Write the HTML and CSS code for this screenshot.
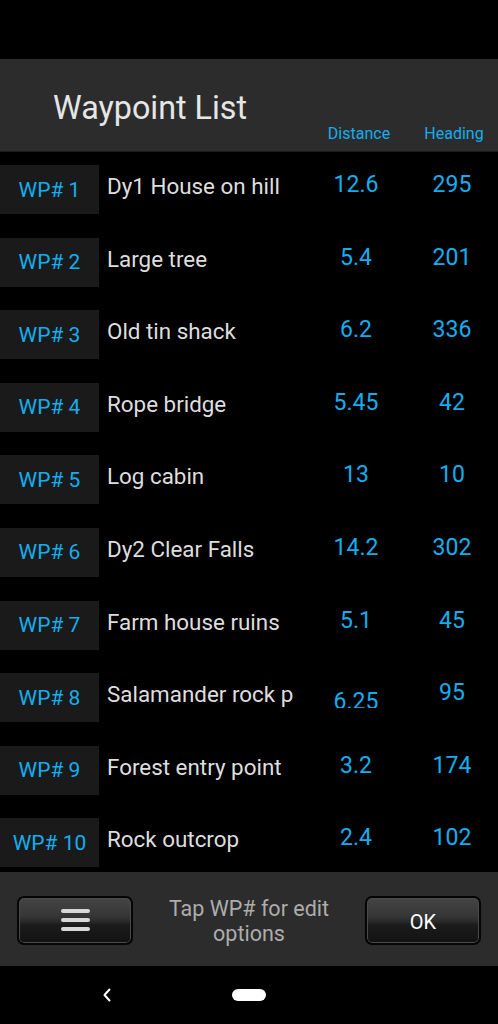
FILE: index.html
```html
<!DOCTYPE html>
<html lang="en">
<head>
  <meta charset="UTF-8">
  <title>Waypoint List</title>
  <link rel="stylesheet" href="styles.css">
</head>

<body>

<div class="screen">
  <div class="statusbar"></div>

  <div class="header">
    <h1 class="title">Waypoint List</h1>
    <div class="colhead dist">Distance</div>
    <div class="colhead head">Heading</div>
  </div>

  <!-- Waypoint rows -->
  <div class="list">
    <div class="row">
      <div class="wp">WP# 1</div>
      <div class="name">Dy1 House on hill</div>
      <div class="num dist">12.6</div>
      <div class="num head">295</div>
    </div>
    <div class="row">
      <div class="wp">WP# 2</div>
      <div class="name">Large tree</div>
      <div class="num dist">5.4</div>
      <div class="num head">201</div>
    </div>
    <div class="row">
      <div class="wp">WP# 3</div>
      <div class="name">Old tin shack</div>
      <div class="num dist">6.2</div>
      <div class="num head">336</div>
    </div>
    <div class="row">
      <div class="wp">WP# 4</div>
      <div class="name">Rope bridge</div>
      <div class="num dist">5.45</div>
      <div class="num head">42</div>
    </div>
    <div class="row">
      <div class="wp">WP# 5</div>
      <div class="name">Log cabin</div>
      <div class="num dist">13</div>
      <div class="num head">10</div>
    </div>
    <div class="row">
      <div class="wp">WP# 6</div>
      <div class="name">Dy2 Clear Falls</div>
      <div class="num dist">14.2</div>
      <div class="num head">302</div>
    </div>
    <div class="row">
      <div class="wp">WP# 7</div>
      <div class="name">Farm house ruins</div>
      <div class="num dist">5.1</div>
      <div class="num head">45</div>
    </div>
    <div class="row">
      <div class="wp">WP# 8</div>
      <div class="name">Salamander rock p</div>
      <div class="num dist low">6.25</div>
      <div class="num head">95</div>
    </div>
    <div class="row">
      <div class="wp">WP# 9</div>
      <div class="name">Forest entry point</div>
      <div class="num dist">3.2</div>
      <div class="num head">174</div>
    </div>
    <div class="row">
      <div class="wp">WP# 10</div>
      <div class="name">Rock outcrop</div>
      <div class="num dist">2.4</div>
      <div class="num head">102</div>
    </div>
  </div>

  <div class="footer">
    <button class="btn menubtn">
      <span class="bar"></span>
      <span class="bar"></span>
      <span class="bar"></span>
    </button>
    <p class="hint">Tap WP# for edit<br>options</p>
    <button class="btn okbtn">OK</button>
  </div>

  <div class="navbar">
    <svg class="back" width="10" height="14" viewBox="0 0 10 14">
      <polyline points="7.5,1.5 2.5,7 7.5,12.5" fill="none" stroke="#fff" stroke-width="2" stroke-linecap="round" stroke-linejoin="round"/>
    </svg>
    <div class="home"></div>
  </div>
</div>

</body>
</html>
```

FILE: styles.css
```css
body {
  margin: 0;
  padding: 0;
  background-color: #000;
  font-family: Roboto, 'Noto Sans', sans-serif;
}

.screen {
  width: 498px;
  height: 1024px;
  overflow: hidden;
}

.statusbar {
  height: 59px;
  background-color: #000;
}

/* Header */
.header {
  height: 93px;
  background-color: #2c2c2c;
  display: flex;
  box-sizing: border-box;
  border-bottom: 1px solid #1c1c1c;
}

.title {
  flex: 1;
  margin: 0;
  padding: 30px 0 0 53px;
  font-size: 32.3px;
  font-weight: normal;
  line-height: 38px;
  color: #e6e6e6;
}

.colhead {
  align-self: flex-end;
  padding-bottom: 8px;
  font-size: 16px;
  line-height: 19px;
  color: #14aeef;
  text-align: center;
}

.colhead.dist {
  width: 100px;
  padding-left: 6px;
  box-sizing: border-box;
}

.colhead.head {
  width: 92px;
  padding-left: 4px;
  box-sizing: border-box;
}

/* List */
.list {
  height: 720px;
  overflow: hidden;
}

.row {
  display: flex;
  height: 72.6px;
}

.wp {
  width: 99px;
  height: 49px;
  margin-top: 13px;
  background-color: #1a1a1a;
  display: flex;
  align-items: center;
  justify-content: center;
  font-size: 21px;
  color: #14aeef;
  flex-shrink: 0;
}

.name {
  width: 191px;
  margin-left: 8px;
  margin-right: 8px;
  padding-top: 22px;
  font-size: 22.4px;
  line-height: 24px;
  color: #dedede;
  white-space: nowrap;
  overflow: hidden;
  flex-shrink: 0;
}

.num {
  height: 48px;
  box-sizing: border-box;
  padding-top: 20px;
  font-size: 23px;
  line-height: 26px;
  color: #14aeef;
  text-align: center;
  overflow: hidden;
}

.num.dist {
  width: 100px;
}

.num.head {
  width: 92px;
}

.num.low {
  padding-top: 29px;
}

/* Footer */
.footer {
  height: 94px;
  background-color: #2c2c2c;
  display: flex;
  align-items: center;
  padding: 0 17px;
  box-sizing: border-box;
}

.btn {
  width: 116px;
  height: 49px;
  margin-top: 2px;
  border: 2px solid #050505;
  border-radius: 7px;
  background: linear-gradient(#454545 0%, #363636 40%, #2a2a2a 52%, #1b1b1b 60%, #121212 100%);
  box-shadow: inset 0 0 0 1px #4a4a4a;
  color: #fff;
  font-family: Roboto, sans-serif;
  font-size: 20px;
  padding: 0;
  display: flex;
  flex-direction: column;
  align-items: center;
  justify-content: center;
  flex-shrink: 0;
}

.bar {
  display: block;
  width: 29px;
  height: 4px;
  margin: 2.5px 0;
  border-radius: 2px;
  background-color: #d8d8d8;
}

.okbtn {
  margin-left: auto;
  padding-top: 3px;
}

.hint {
  flex: 1;
  margin: 0;
  padding-top: 4px;
  text-align: center;
  font-size: 21.5px;
  line-height: 25px;
  color: #adadad;
}

/* Navigation bar */
.navbar {
  height: 58px;
  background-color: #000;
  position: relative;
}

.back {
  position: absolute;
  left: 102px;
  top: 22px;
}

.home {
  position: absolute;
  left: 232px;
  top: 23px;
  width: 34px;
  height: 12px;
  border-radius: 6px;
  background-color: #fff;
}
```
